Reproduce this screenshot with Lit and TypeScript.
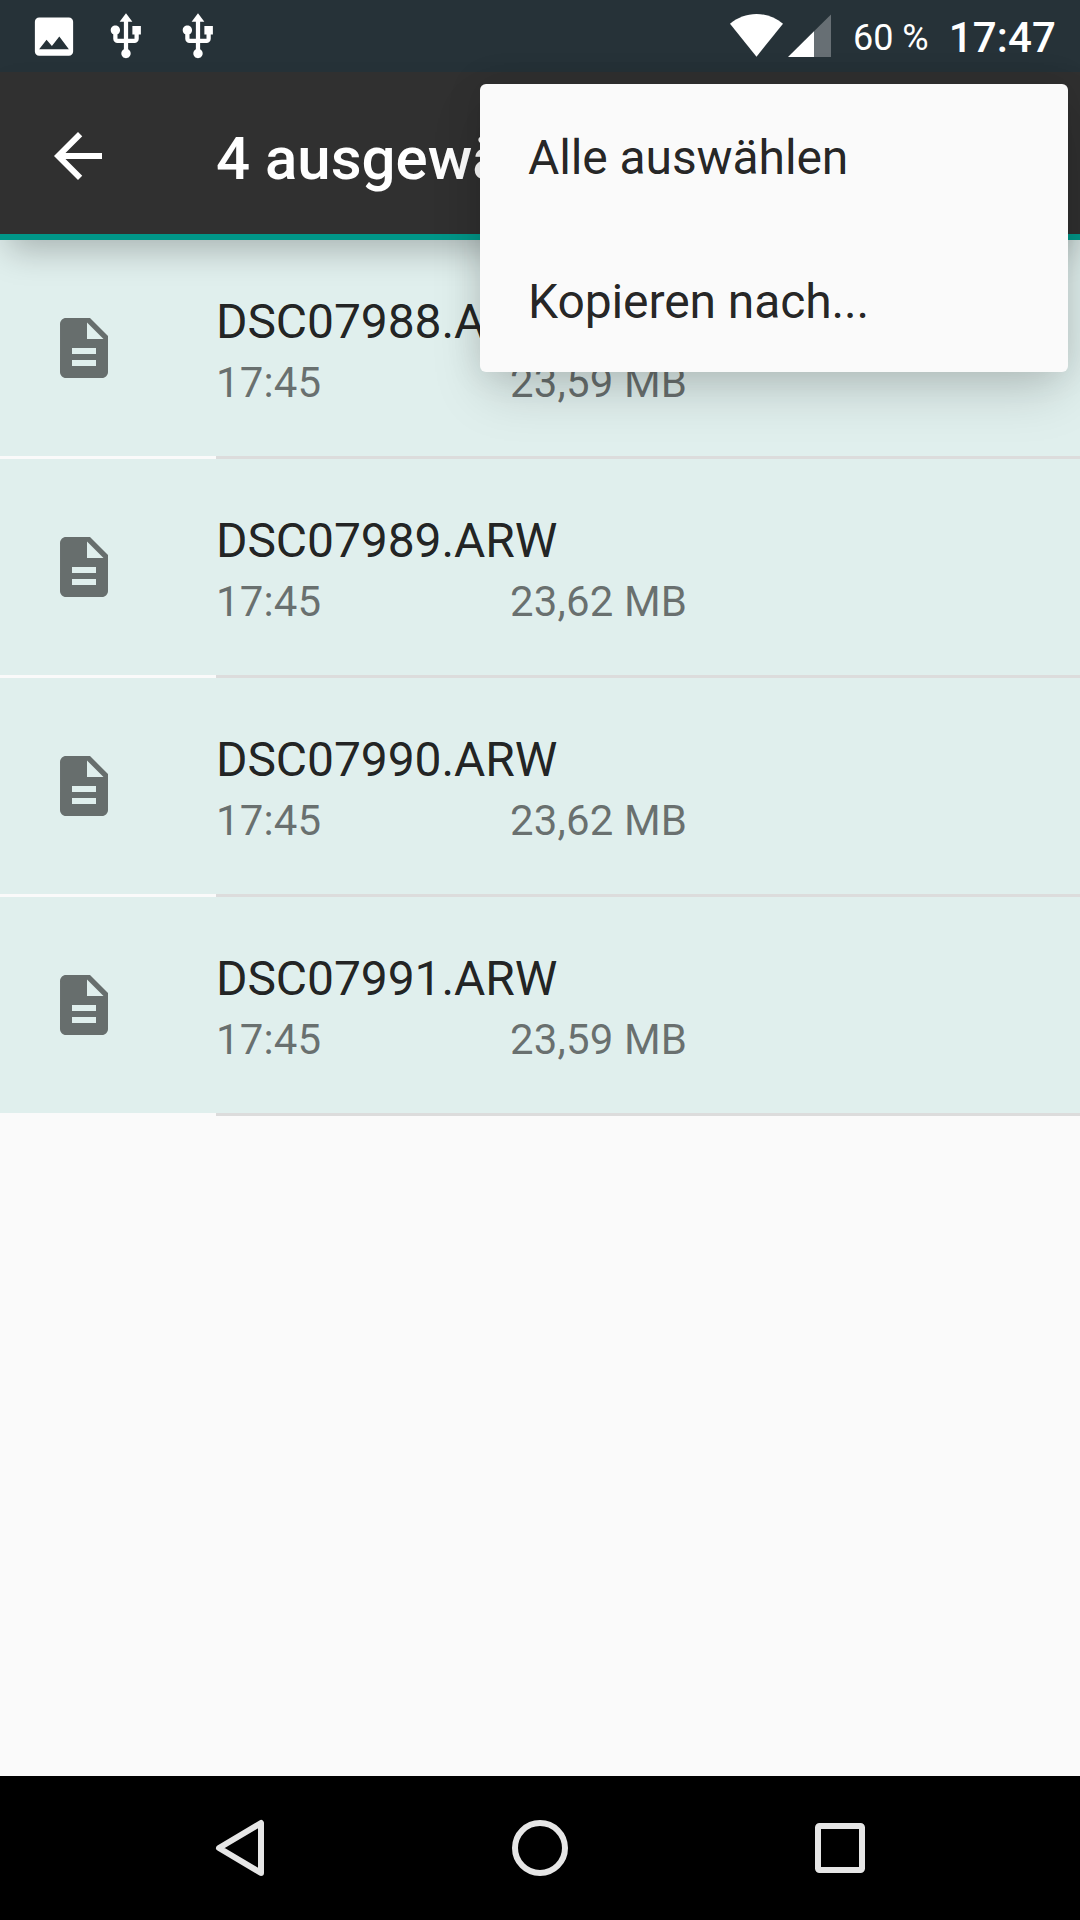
import { LitElement, html, css, svg } from "lit";
import { customElement, property } from "lit/decorators.js";

interface FileEntry {
  name: string;
  time: string;
  size: string;
}

const FILES: FileEntry[] = [
  { name: "DSC07988.ARW", time: "17:45", size: "23,59 MB" },
  { name: "DSC07989.ARW", time: "17:45", size: "23,62 MB" },
  { name: "DSC07990.ARW", time: "17:45", size: "23,62 MB" },
  { name: "DSC07991.ARW", time: "17:45", size: "23,59 MB" },
];

const MENU = ["Alle auswählen", "Kopieren nach..."];

const ICONS = {
  image: svg`<path d="M21 19V5c0-1.1-.9-2-2-2H5c-1.1 0-2 .9-2 2v14c0 1.1.9 2 2 2h14c1.1 0 2-.9 2-2zM8.5 13.5l2.5 3.01L14.5 12l4.5 6H5l3.5-4.5z"/>`,
  usb: svg`<path d="M15 7v4h1v2h-3V5h2l-3-4-3 4h2v8H8v-2.07c.7-.37 1.2-1.08 1.2-1.93 0-1.21-.99-2.2-2.2-2.2-1.21 0-2.2.99-2.2 2.2 0 .85.5 1.56 1.2 1.93V13c0 1.11.89 2 2 2h3v3.05c-.71.37-1.2 1.1-1.2 1.95 0 1.22.99 2.2 2.2 2.2 1.21 0 2.2-.98 2.2-2.2 0-.85-.49-1.58-1.2-1.95V15h3c1.11 0 2-.89 2-2v-2h1V7h-4z"/>`,
  back: svg`<path d="M20 11H7.83l5.59-5.59L12 4l-8 8 8 8 1.41-1.41L7.83 13H20v-2z"/>`,
  file: svg`<path d="M14 2H6c-1.1 0-1.99.9-1.99 2L4 20c0 1.1.89 2 1.99 2H18c1.1 0 2-.9 2-2V8l-6-6zm2 16H8v-2h8v2zm0-4H8v-2h8v2zm-3-5V3.5L18.5 9H13z"/>`,
};

@customElement("file-row")
export class FileRow extends LitElement {
  @property({ attribute: false }) entry!: FileEntry;

  static styles = css`
    :host {
      display: flex;
      flex-direction: column;
    }
    .row {
      display: flex;
      height: 216px;
      box-sizing: border-box;
      background: #e0efed;
    }
    .lead {
      display: flex;
      align-items: center;
      flex: none;
      width: 216px;
      padding-left: 48px;
      box-sizing: border-box;
    }
    .icon {
      width: 72px;
      height: 72px;
      fill: rgba(0, 0, 0, 0.54);
    }
    .text {
      flex: 1;
      padding-top: 54px;
    }
    .name {
      font-size: 48px;
      line-height: 56px;
      letter-spacing: -0.08px;
      color: rgba(0, 0, 0, 0.87);
    }
    .meta {
      display: grid;
      grid-template-columns: 294px 1fr;
      padding-top: 8px;
      font-size: 42px;
      line-height: 50px;
      letter-spacing: 0.15px;
      color: rgba(0, 0, 0, 0.54);
    }
    .divider {
      height: 3px;
      margin-left: 216px;
      background: #dcdcdc;
    }
  `;

  render() {
    return html`
      <div class="row">
        <div class="lead"><svg class="icon" viewBox="0 0 24 24">${ICONS.file}</svg></div>
        <div class="text">
          <div class="name">${this.entry.name}</div>
          <div class="meta"><span>${this.entry.time}</span><span>${this.entry.size}</span></div>
        </div>
      </div>
      <div class="divider"></div>
    `;
  }
}

@customElement("app-root")
export class AppRoot extends LitElement {
  static styles = css`
    :host {
      display: block;
      font-family: Roboto, "Liberation Sans", sans-serif;
    }
    .screen {
      position: relative;
      display: flex;
      flex-direction: column;
      width: 1080px;
      height: 1920px;
      overflow: hidden;
      background: #fafafa;
    }
    .status {
      display: flex;
      justify-content: space-between;
      align-items: center;
      flex: none;
      height: 72px;
      padding: 0 24px 0 18px;
      box-sizing: border-box;
      background: #263238;
      color: #fff;
    }
    .notes,
    .system {
      display: flex;
      align-items: center;
      height: 72px;
    }
    .note {
      width: 51px;
      height: 51px;
      padding: 0 10.5px;
      fill: #fff;
    }
    .signals {
      width: 104px;
      height: 72px;
      margin-right: 20px;
    }
    .battery {
      font-size: 36px;
      line-height: 42px;
      padding-top: 4px;
      margin-right: 20px;
    }
    .clock {
      font-size: 42px;
      line-height: 50px;
      font-weight: 500;
      letter-spacing: 0.15px;
      padding-top: 4px;
    }
    .bar {
      position: relative;
      z-index: 1;
      display: flex;
      align-items: center;
      flex: none;
      height: 168px;
      box-sizing: border-box;
      padding: 6px 0 0 42px;
      background: #303030;
      border-bottom: 6px solid #009688;
      box-shadow: 0 18px 32px -8px rgba(0, 0, 0, 0.25);
    }
    .back {
      flex: none;
      width: 72px;
      height: 72px;
      fill: #fff;
    }
    .title {
      margin-left: 102px;
      padding-top: 6px;
      font-size: 60px;
      line-height: 72px;
      font-weight: 500;
      color: #fff;
      white-space: nowrap;
    }
    .list {
      display: flex;
      flex-direction: column;
      flex: 1;
    }
    .nav {
      flex: none;
      display: flex;
      align-items: center;
      justify-content: center;
      gap: 156px;
      height: 144px;
      background: #000;
    }
    .key {
      width: 144px;
      height: 144px;
      fill: none;
      stroke: #e6e6e6;
      stroke-width: 6;
      stroke-linejoin: round;
    }
    .menu {
      position: absolute;
      z-index: 2;
      top: 84px;
      right: 12px;
      width: 588px;
      border-radius: 6px;
      background: #fafafa;
      box-shadow: 0 24px 50px -6px rgba(0, 0, 0, 0.17), 0 0 36px rgba(0, 0, 0, 0.1);
    }
    .item {
      height: 144px;
      box-sizing: border-box;
      padding: 3px 48px 0;
      font-size: 48px;
      line-height: 141px;
      letter-spacing: -0.1px;
      color: rgba(0, 0, 0, 0.87);
    }
  `;

  private note(icon: unknown) {
    return html`<svg class="note" viewBox="0 0 24 24">${icon}</svg>`;
  }

  render() {
    return html`
      <div class="screen">
        <div class="status">
          <div class="notes">
            ${this.note(ICONS.image)} ${this.note(ICONS.usb)} ${this.note(ICONS.usb)}
          </div>
          <div class="system">
            <svg class="signals" viewBox="729 0 104 72">
              <path fill="#fff" d="M756.5 56.7L730 23.7C737.5 17.5 746.5 14 756.5 14S775.5 17.5 783 23.7Z" />
              <path fill="#fff" fill-opacity=".3" d="M831 14.5V57H814V31.300Z" />
              <path fill="#fff" d="M814 31.3V57H788Z" />
            </svg>
            <span class="battery">60 %</span>
            <span class="clock">17:47</span>
          </div>
        </div>
        <div class="bar">
          <svg class="back" viewBox="0 0 24 24">${ICONS.back}</svg>
          <div class="title">4 ausgewählt</div>
        </div>
        <div class="list">${FILES.map((f) => html`<file-row .entry=${f}></file-row>`)}</div>
        <div class="nav">
          <svg class="key" viewBox="0 0 144 144"><path d="M93 47V97L51 72Z" /></svg>
          <svg class="key" viewBox="0 0 144 144"><circle cx="72" cy="72" r="25" /></svg>
          <svg class="key" viewBox="0 0 144 144"><rect x="50" y="50" width="44" height="44" rx="1.5" /></svg>
        </div>
        <div class="menu">${MENU.map((m) => html`<div class="item">${m}</div>`)}</div>
      </div>
    `;
  }
}
